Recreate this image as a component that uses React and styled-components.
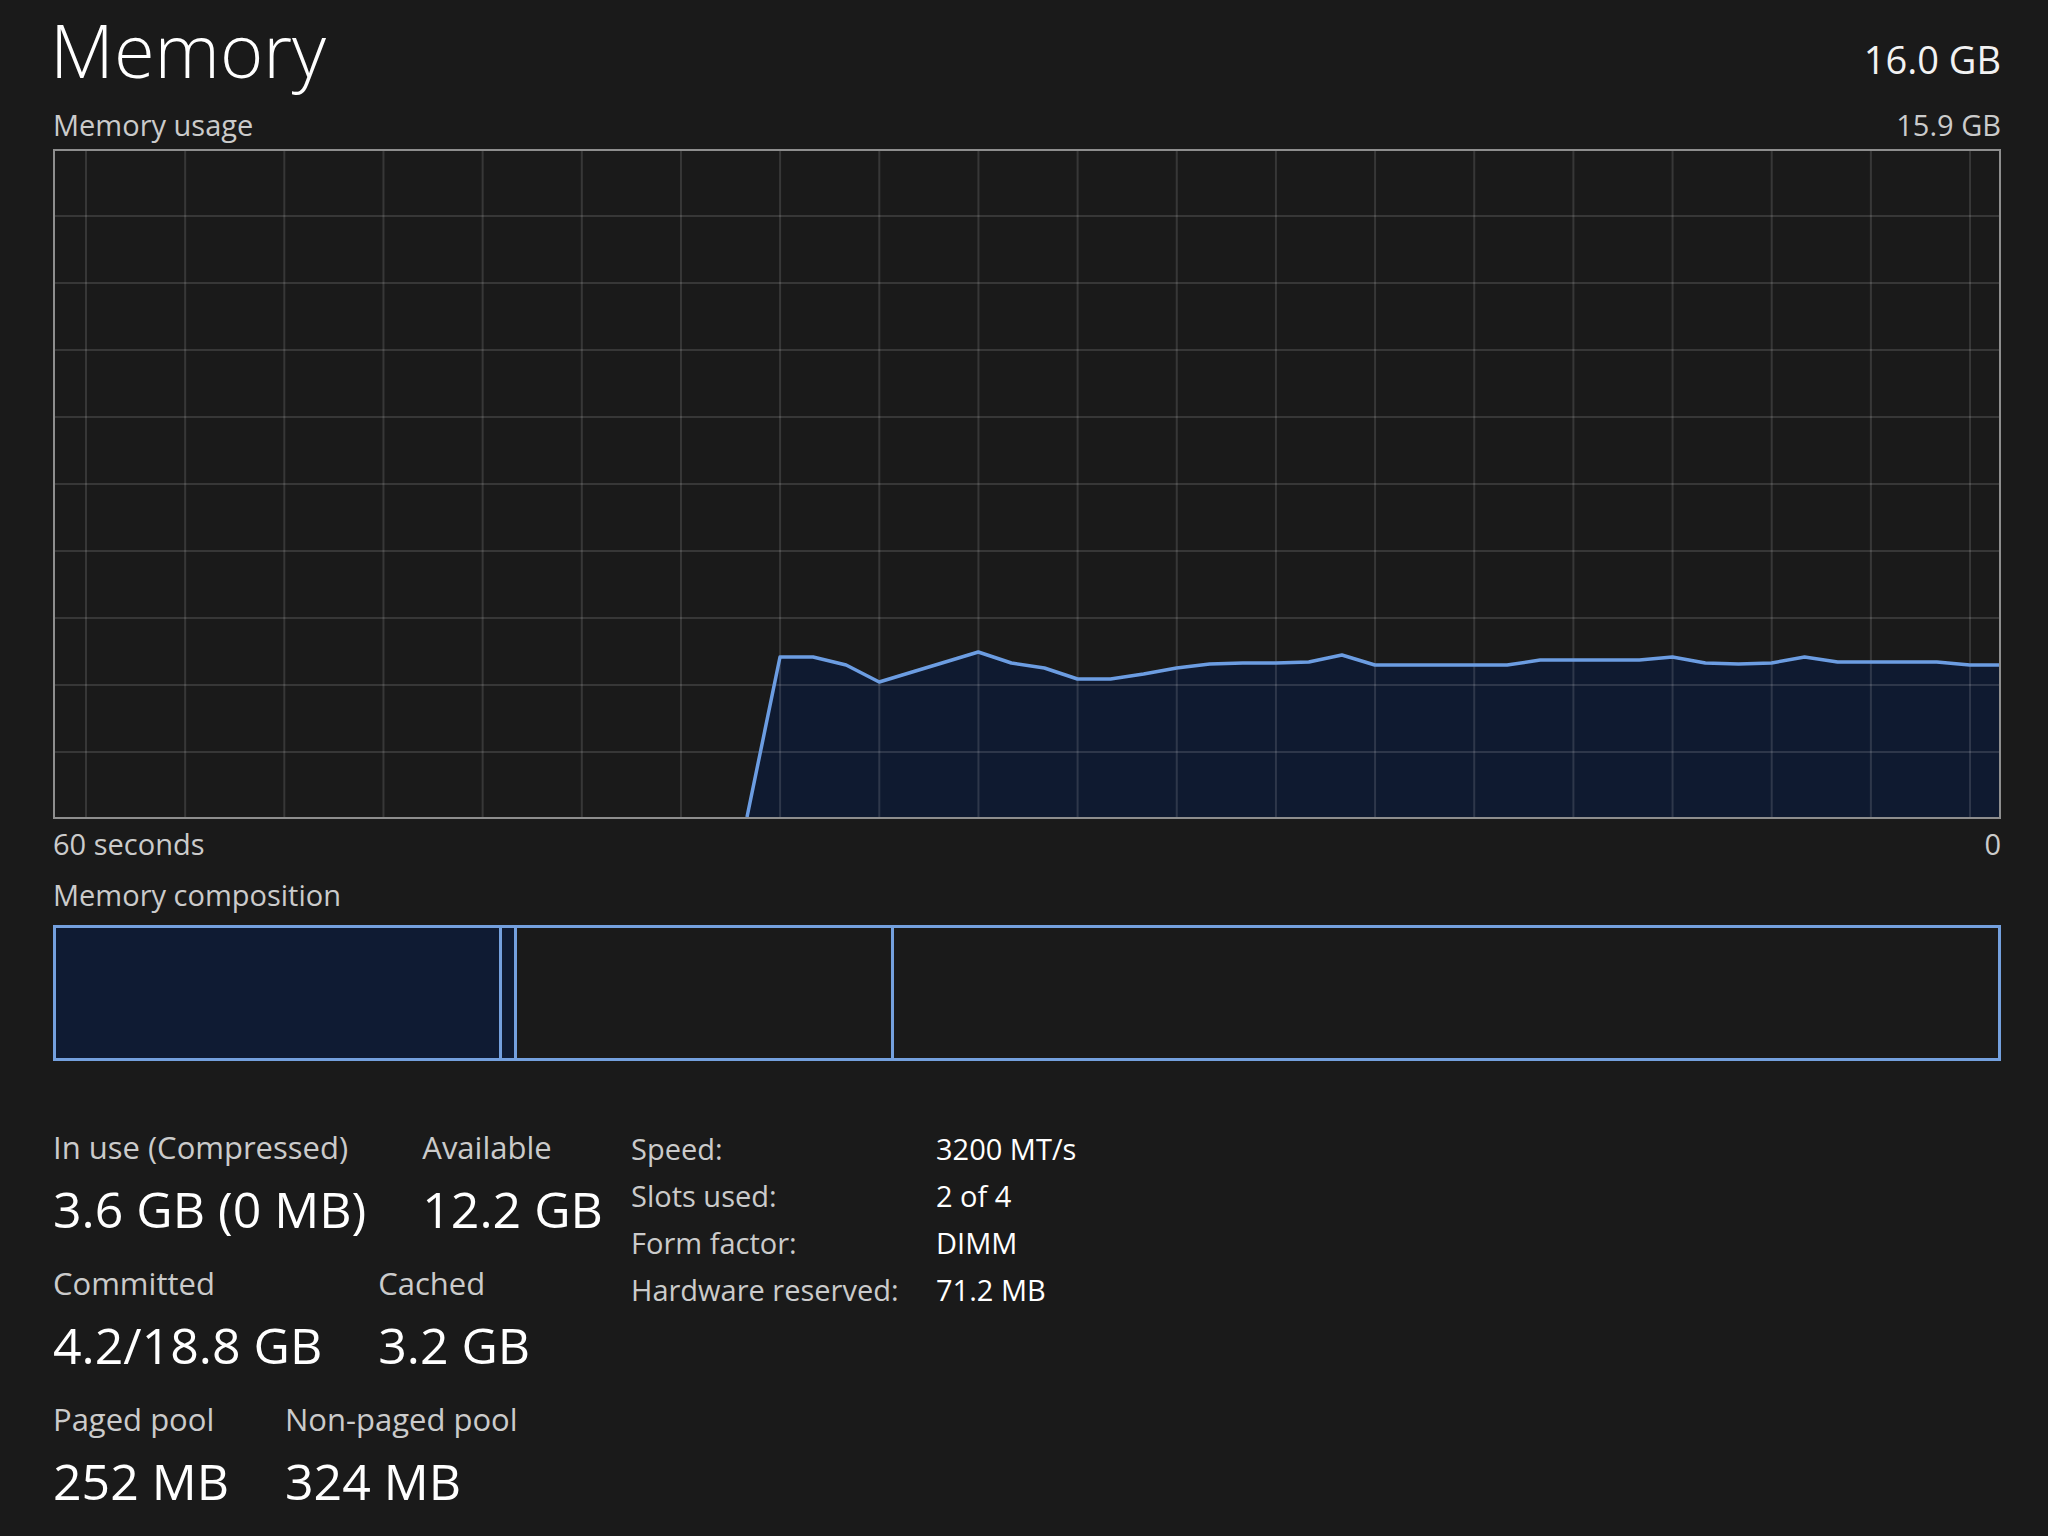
import React from 'react';
import styled, { createGlobalStyle } from 'styled-components';

const Global = createGlobalStyle`
  html, body { margin: 0; padding: 0; background: #1a1a1a; }
  body { font-family: "Open Sans", "Noto Sans", sans-serif; }
`;

const Page = styled.div`
  width: 2048px;
  height: 1536px;
  box-sizing: border-box;
  padding: 0 47px 0 53px;
  background: #1a1a1a;
  display: flex;
  flex-direction: column;
  font-family: "Open Sans", "Noto Sans", sans-serif;
  overflow: hidden;
`;

const Header = styled.div`
  display: flex;
  justify-content: space-between;
  align-items: flex-start;
`;

const Title = styled.h1`
  margin: 0 0 0 -3px;
  font-size: 74px;
  font-weight: 300;
  line-height: 100px;
  color: #ffffff;
`;

const Capacity = styled.span`
  margin-top: 40px;
  font-size: 38px;
  line-height: 38px;
  color: #f2f2f2;
`;

const LabelRow = styled.div`
  display: flex;
  justify-content: space-between;
  margin-top: ${(p) => p.$mt}px;
  font-size: 29px;
  line-height: 36px;
  color: #cbcbcb;
  white-space: nowrap;
`;

const Graph = styled.div`
  margin-top: 6px;
  height: 670px;
  flex: none;
  box-sizing: border-box;
  border: 2px solid #8e8e8e;
`;

const GraphSvg = styled.svg`
  display: block;
  width: 100%;
  height: 100%;
`;

const Composition = styled.div`
  margin-top: 12px;
  height: 136px;
  flex: none;
  box-sizing: border-box;
  border: 3px solid #74a0de;
  display: flex;
`;

const Segment = styled.div`
  box-sizing: border-box;
  flex: ${(p) => (p.$w ? `0 0 ${p.$w}px` : '1 1 auto')};
  background: ${(p) => (p.$filled ? '#0f1b33' : 'transparent')};
  border-right: ${(p) => (p.$last ? 'none' : '3px solid #74a0de')};
`;

const Stats = styled.div`
  display: flex;
  margin-top: 64px;
`;

const LeftStats = styled.div`
  flex: 0 0 578px;
  padding-top: 4px;
  display: flex;
  flex-direction: column;
  gap: 26px;
`;

const StatRow = styled.div`
  display: flex;
  gap: 56px;
`;

const Stat = styled.div`
  display: flex;
  flex-direction: column;
`;

const StatLabel = styled.div`
  font-size: 31px;
  line-height: 36px;
  color: #cbcbcb;
  white-space: nowrap;
`;

const StatValue = styled.div`
  margin-top: 14px;
  font-size: 50px;
  line-height: 60px;
  color: #ffffff;
  white-space: nowrap;
`;

const Details = styled.dl`
  margin: 0;
  display: grid;
  grid-template-columns: 305px auto;
  grid-auto-rows: 47px;
  align-content: start;
  font-size: 29px;
  line-height: 47px;
  white-space: nowrap;
`;

const DLabel = styled.dt`
  margin: 0;
  color: #cbcbcb;
`;

const DValue = styled.dd`
  margin: 0;
  color: #ffffff;
`;

// graph geometry (inner area 1944 x 666)
const W = 1944;
const H = 666;
const SAMPLE = 33.05;
const X0 = 31; // first vertical grid line, relative to inner left
const ys = [
  657, 657, 665, 682, 672, 662, 652, 663, 668, 679, 679, 674, 668, 664, 663,
  663, 662, 655, 665, 665, 665, 665, 665, 660, 660, 660, 660, 657, 663, 664,
  663, 657, 662, 662, 662, 662, 665,
];
const pts = ys.map((y, i) => [X0 + SAMPLE * (21 + i), y - 151]);
pts.push([W, 665 - 151]);
const startX = X0 + SAMPLE * 20;
const linePath =
  `M${startX.toFixed(1)},${H} ` + pts.map(([x, y]) => `L${x.toFixed(1)},${y}`).join(' ');
const fillPath = `${linePath} L${W},${H} Z`;

const vLines = Array.from({ length: 20 }, (_, k) => X0 + 99.16 * k);
const hLines = Array.from({ length: 9 }, (_, k) => 67 * (k + 1) - 2);

const segments = [
  { w: 446, filled: true },
  { w: 15, filled: true },
  { w: 377, filled: false },
  { w: 0, filled: false, last: true },
];

const statRows = [
  [
    { label: 'In use (Compressed)', value: '3.6 GB (0 MB)' },
    { label: 'Available', value: '12.2 GB' },
  ],
  [
    { label: 'Committed', value: '4.2/18.8 GB' },
    { label: 'Cached', value: '3.2 GB' },
  ],
  [
    { label: 'Paged pool', value: '252 MB' },
    { label: 'Non-paged pool', value: '324 MB' },
  ],
];

const details = [
  ['Speed:', '3200 MT/s'],
  ['Slots used:', '2 of 4'],
  ['Form factor:', 'DIMM'],
  ['Hardware reserved:', '71.2 MB'],
];

export default function App() {
  return (
    <Page>
      <Global />
      <Header>
        <Title>Memory</Title>
        <Capacity>16.0 GB</Capacity>
      </Header>
      <LabelRow $mt={7}>
        <span>Memory usage</span>
        <span>15.9 GB</span>
      </LabelRow>
      <Graph>
        <GraphSvg viewBox={`0 0 ${W} ${H}`} preserveAspectRatio="none">
          <path d={fillPath} fill="#0f1a30" />
          {vLines.map((x) => (
            <line key={`v${x}`} x1={x} x2={x} y1={0} y2={H} stroke="rgba(255,255,255,0.13)" strokeWidth="2" />
          ))}
          {hLines.map((y) => (
            <line key={`h${y}`} x1={0} x2={W} y1={y} y2={y} stroke="rgba(255,255,255,0.13)" strokeWidth="2" />
          ))}
          <path d={linePath} fill="none" stroke="#6c9de2" strokeWidth="3.5" strokeLinejoin="round" />
        </GraphSvg>
      </Graph>
      <LabelRow $mt={7}>
        <span>60 seconds</span>
        <span>0</span>
      </LabelRow>
      <LabelRow $mt={15}>
        <span>Memory composition</span>
      </LabelRow>
      <Composition>
        {segments.map((s, i) => (
          <Segment key={i} $w={s.w} $filled={s.filled} $last={s.last} />
        ))}
      </Composition>
      <Stats>
        <LeftStats>
          {statRows.map((row, i) => (
            <StatRow key={i}>
              {row.map((s) => (
                <Stat key={s.label}>
                  <StatLabel>{s.label}</StatLabel>
                  <StatValue>{s.value}</StatValue>
                </Stat>
              ))}
            </StatRow>
          ))}
        </LeftStats>
        <Details>
          {details.map(([k, v]) => (
            <React.Fragment key={k}>
              <DLabel>{k}</DLabel>
              <DValue>{v}</DValue>
            </React.Fragment>
          ))}
        </Details>
      </Stats>
    </Page>
  );
}
